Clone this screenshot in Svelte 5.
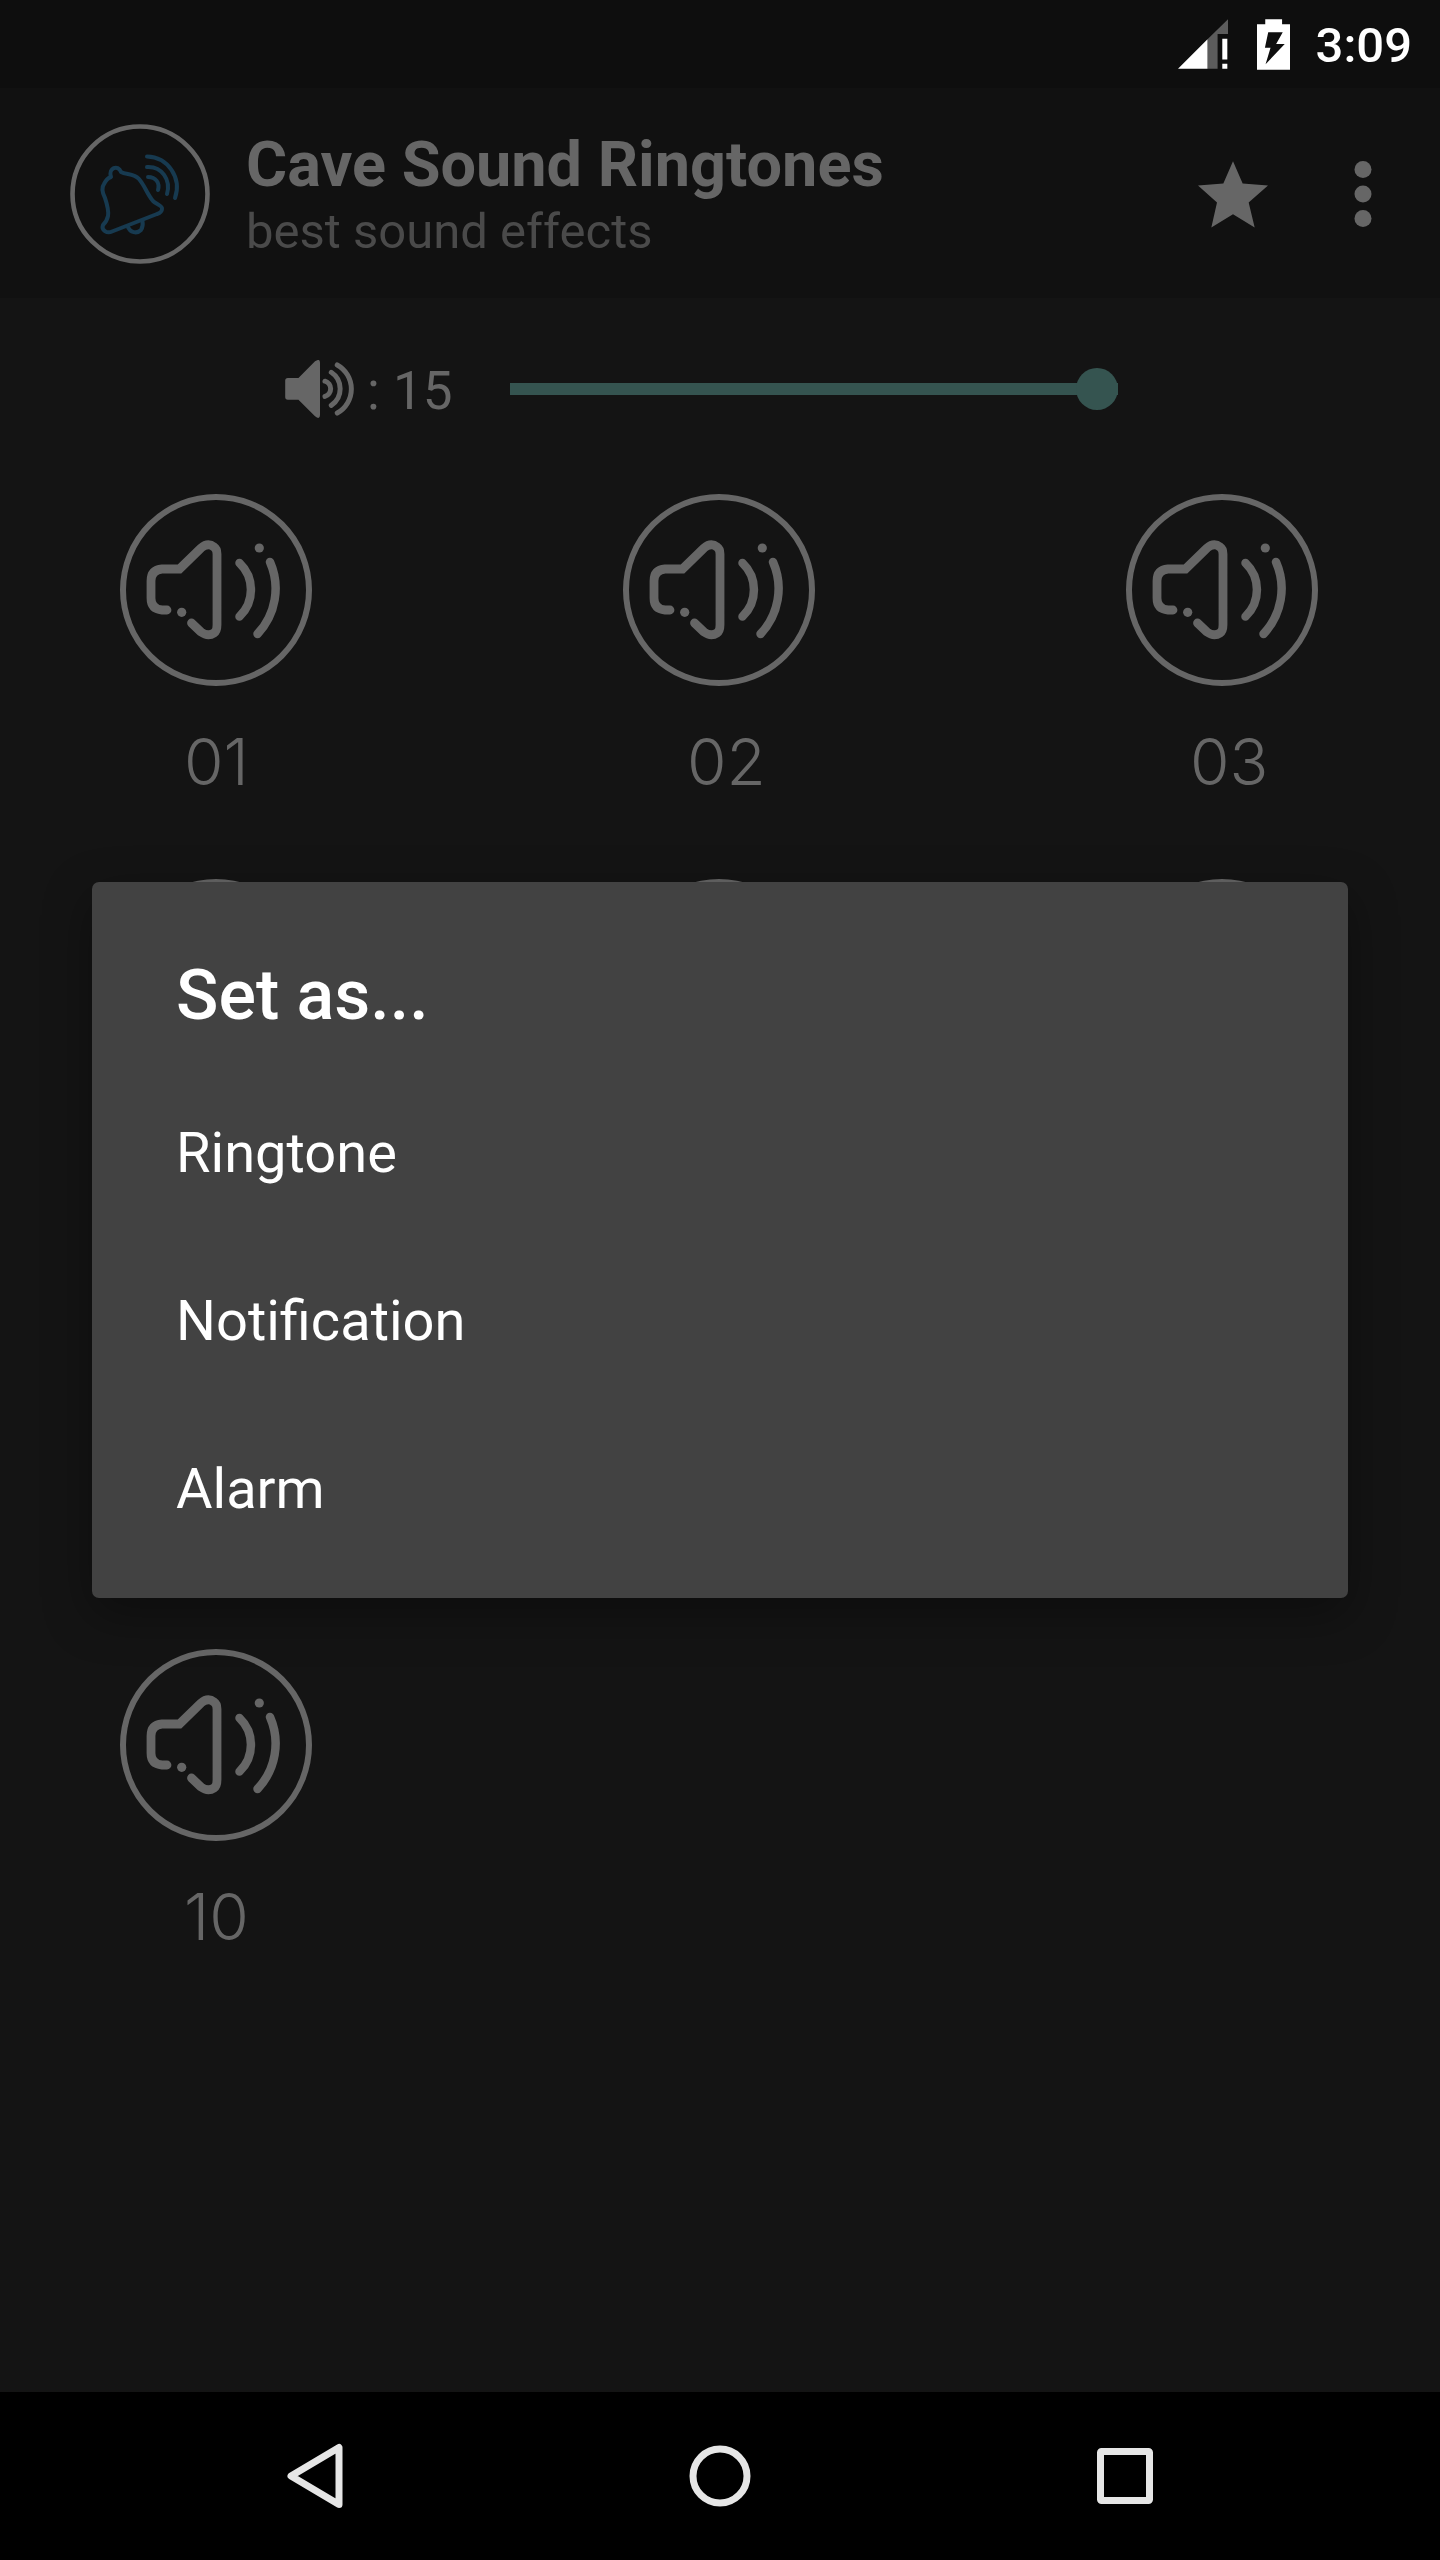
<script>
  const sounds = Array.from({ length: 10 }, (_, i) => String(i + 1).padStart(2, '0'));
  const targets = ['Ringtone', 'Notification', 'Alarm'];
  let volume = $state(15);
  let dialogOpen = $state(true);
</script>

<div class="screen">
  <div class="status">
    <svg class="signal" viewBox="113 57 149 148" aria-label="Mobile signal">
      <path d="M262 57V101H231V205H201V117Z" fill="#5c5c5c" />
      <path d="M113 205L201 117V205Z" fill="#fff" />
      <path d="M245 115H260V177H245ZM245 190H260V205H245Z" fill="#fff" />
    </svg>
    <svg class="battery" viewBox="350 54 100 153" aria-label="Battery charging">
      <path d="M375 54H426V69H450V207H350V69H375Z" fill="#fff" />
      <path d="M384 93H428L408 129H434L376 190L391 140H374Z" fill="#0e0e0e" />
    </svg>
    <time>3:09</time>
  </div>

  <div class="app">
    <header>
      <svg class="logo" viewBox="0 0 140 140" aria-hidden="true">
        <circle cx="70" cy="70" r="67.5" fill="none" stroke="#666" stroke-width="4.6" />
        <g fill="none" stroke="#173a50" stroke-width="4" stroke-linecap="round" stroke-linejoin="round">
          <path d="M41 53C38 44 48 40 51 48C56 51 64 49 69 55C75 62 77 70 83 77C86 80 93 82 92 85C92 88 90 89 87 90L42 107.500C37 110 31 106 33 101C35 99 37 97 38 92C39 86 37 80 35 74C32 68 31 64 34 60C36 56 38 54 41 53Z" />
          <path d="M57.500 102C60 109 67 110 71 106C73 103 73 100 72.500 97" />
          <path d="M78 53C86 53 90 59 88 66" />
          <path d="M77 43C92 42 101 56 97 70" />
          <path d="M77 32.500C98 33 112 54 105 74" />
        </g>
      </svg>
      <div class="titles">
        <h1>Cave Sound Ringtones</h1>
        <p>best sound effects</p>
      </div>
      <button class="icon" aria-label="Favorites">
        <svg class="star" viewBox="175 175 210 200">
          <path d="M280 175L309 242L385 248L327 299L345 374L280 334L215 374L232 299L175 248L251 242Z" fill="#666" />
        </svg>
      </button>
      <button class="icon" aria-label="More options">
        <svg class="dots" viewBox="0 0 18 68" fill="#666">
          <circle cx="9" cy="9.500" r="8.500" />
          <circle cx="9" cy="34" r="8.500" />
          <circle cx="9" cy="58.500" r="8.500" />
        </svg>
      </button>
    </header>

    <div class="volume">
      <label for="volume">
        <svg viewBox="75 90 210 175" aria-label="Volume">
          <path d="M75 152Q75 144 83 144H115L165 94Q180 84 180 98V256Q180 271 165 260L115 210H83Q75 210 75 202Z" fill="#666" />
          <g fill="none" stroke="#666" stroke-width="15" stroke-linecap="round">
            <path d="M195 154A24 24 0 0 1 195 200" />
            <path d="M214 127A60 60 0 0 1 214 227" />
            <path d="M232 105A83 83 0 0 1 232 250" />
          </g>
        </svg>
        <span>: {volume}</span>
      </label>
      <input id="volume" type="range" min="0" max="15" bind:value={volume} />
    </div>

    <main class:covered={dialogOpen}>
      {#each sounds as sound}
        <button class="sound" aria-label={sound}>
          <svg viewBox="0 0 192 192" aria-hidden="true">
            <g fill="none" stroke="#666" stroke-linecap="round">
              <circle cx="96" cy="96" r="93" stroke-width="6" />
              <path
                d="M47 116H42Q31 115 31 104V87Q31 76 42 75H59.500L81 54Q88 48 94 53Q97 55 97 60V131Q97 137 94 139Q88 143 81 138L71.500 129"
                stroke-width="8.800"
              />
              <path d="M119.500 69A37 37 0 0 1 119.500 122.500" stroke-width="8.500" />
              <path d="M150 68A66 66 0 0 1 137.500 140" stroke-width="8.500" />
            </g>
            <circle cx="61.700" cy="118.300" r="4.600" fill="#666" />
            <circle cx="139.300" cy="54" r="4.600" fill="#666" />
          </svg>
          <span>{sound}</span>
        </button>
      {/each}
    </main>

    {#if dialogOpen}
      <div class="overlay">
        <div class="dialog" role="dialog" aria-labelledby="dialog-title">
          <h2 id="dialog-title">Set as...</h2>
          {#each targets as target}
            <button onclick={() => (dialogOpen = false)}>{target}</button>
          {/each}
        </div>
      </div>
    {/if}
  </div>

  <nav>
    <button aria-label="Back">
      <svg viewBox="0 0 66 66">
        <path d="M57 4.500V61.500L9 33Z" />
      </svg>
    </button>
    <button aria-label="Home">
      <svg viewBox="0 0 66 66"><circle cx="33" cy="33" r="27" /></svg>
    </button>
    <button aria-label="Recent apps">
      <svg viewBox="0 0 66 66"><rect x="8.500" y="8.500" width="49" height="49" rx="1" /></svg>
    </button>
  </nav>
</div>

<style>
  :global(body) {
    background: #141414;
  }

  .screen {
    min-height: 100vh;
    display: flex;
    flex-direction: column;
    background: #141414;
    color: #666;
    font-family: Roboto, sans-serif;
  }

  button {
    border: 0;
    padding: 0;
    background: none;
    color: inherit;
    font: inherit;
    cursor: pointer;
  }

  svg {
    display: block;
    flex: none;
  }

  h1,
  h2,
  p {
    margin: 0;
  }

  .status {
    height: 88px;
    box-sizing: border-box;
    padding-right: 28px;
    display: flex;
    align-items: center;
    justify-content: flex-end;
    background: #0e0e0e;
    color: #fff;
  }

  .signal {
    width: 50px;
    height: 50px;
    margin-right: 29px;
  }

  .battery {
    width: 33px;
    height: 51px;
    margin-right: 26px;
  }

  time {
    padding-top: 4px;
    font-size: 49px;
    font-weight: 500;
    line-height: 58px;
  }

  .app {
    position: relative;
    flex: 1;
  }

  header {
    height: 210px;
    box-sizing: border-box;
    padding: 2px 68px 0 70px;
    display: flex;
    align-items: center;
    background: #111;
  }

  .logo {
    width: 140px;
    height: 140px;
  }

  .titles {
    flex: 1;
    margin-left: 36px;
    padding-top: 4px;
  }

  h1 {
    font-size: 63px;
    font-weight: 700;
    line-height: 72px;
  }

  p {
    color: #4a4a4a;
    font-size: 49px;
    line-height: 62px;
  }

  .icon {
    margin-left: 86px;
  }

  .star {
    width: 70px;
    height: 67px;
  }

  .dots {
    width: 18px;
    height: 68px;
  }

  .volume {
    height: 182px;
    padding: 0 322px 0 285px;
    display: flex;
    align-items: center;
  }

  label {
    width: 225px;
    display: flex;
    align-items: center;
    gap: 12px;
    font-size: 53px;
    line-height: 62px;
  }

  label svg {
    width: 70px;
    height: 58px;
  }

  label span {
    padding-top: 4px;
  }

  input {
    flex: 1;
    min-width: 0;
    height: 42px;
    margin: 0;
    appearance: none;
    background: none;
  }

  input::-webkit-slider-runnable-track {
    height: 12px;
    background: #355450;
  }

  input::-webkit-slider-thumb {
    appearance: none;
    width: 42px;
    height: 42px;
    margin-top: -15px;
    border-radius: 50%;
    background: #355450;
  }

  main {
    padding: 14px 122px 0 120px;
    display: grid;
    grid-template-columns: repeat(3, 192px);
    justify-content: space-between;
    row-gap: 77px;
  }

  .sound svg {
    width: 192px;
    height: 192px;
  }

  .sound span {
    display: block;
    padding: 36px 0 0 64px;
    font-family: Inter, sans-serif;
    font-size: 64px;
    font-weight: 300;
    line-height: 80px;
    text-align: left;
  }

  /* the dialog lies over the labels of the two middle rows */
  .covered .sound:nth-child(n + 4):nth-child(-n + 9) span {
    visibility: hidden;
  }

  .overlay {
    position: absolute;
    inset: 0;
    display: flex;
    align-items: center;
    padding: 0 92px;
  }

  .dialog {
    flex: 1;
    padding: 72px 0 25px;
    border-radius: 7px;
    background: #424242;
    color: #fff;
    box-shadow: 0 16px 48px rgb(0 0 0 / 35%);
  }

  h2 {
    padding: 0 84px 33px;
    font-size: 70px;
    font-weight: 500;
    line-height: 82px;
  }

  .dialog button {
    display: block;
    width: 100%;
    padding: 0 84px;
    font-size: 56px;
    line-height: 168px;
    text-align: left;
  }

  nav {
    height: 168px;
    padding: 0 112px;
    display: grid;
    grid-template-columns: repeat(3, 1fr);
    background: #000;
  }

  nav button {
    display: grid;
    place-items: center;
  }

  nav svg {
    width: 66px;
    height: 66px;
    fill: none;
    stroke: #e6e6e6;
    stroke-width: 7px;
    stroke-linejoin: round;
  }
</style>
